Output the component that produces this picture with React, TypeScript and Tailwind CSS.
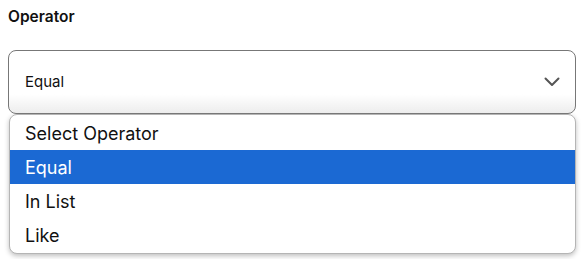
import React from "react";

export default function App() {
  const options = ["Select Operator", "Equal", "In List", "Like"];
  return (
    <div className="w-[583px] h-[259px] bg-white overflow-hidden" style={{ fontFamily: "Inter, 'Noto Sans', sans-serif" }}>
      <div className="pl-[8px] pr-[7px] pt-[7px]">
        <div className="text-[15.5px] font-semibold text-[#111] leading-[20px]">Operator</div>
        <div className="mt-[23px] relative h-[64px] rounded-[8px] border border-[#777] bg-gradient-to-b from-white from-70% to-[#ededed] flex items-center justify-between pl-[16px] pr-[14px]">
          <span className="text-[15px] text-[#111]">Equal</span>
          <svg width="16" height="10" viewBox="0 0 16 10" className="mr-[1px]">
            <path d="M1.5 1.5 L8 8 L14.5 1.5" fill="none" stroke="#555" strokeWidth="2" strokeLinecap="round" strokeLinejoin="round" />
          </svg>
        </div>
        <div className="ml-[1px] mt-0 rounded-[8px] border border-[#b5b5b5] bg-white shadow-[0_2px_5px_rgba(0,0,0,0.25)] py-[1px] overflow-hidden">
          {options.map((o, i) => (
            <div
              key={o}
              className={
                "h-[34px] flex items-center pl-[15px] text-[18px] " +
                (i === 1 ? "bg-[#1b69d3] text-white" : "text-[#111]")
              }
            >
              {o}
            </div>
          ))}
        </div>
      </div>
    </div>
  );
}
